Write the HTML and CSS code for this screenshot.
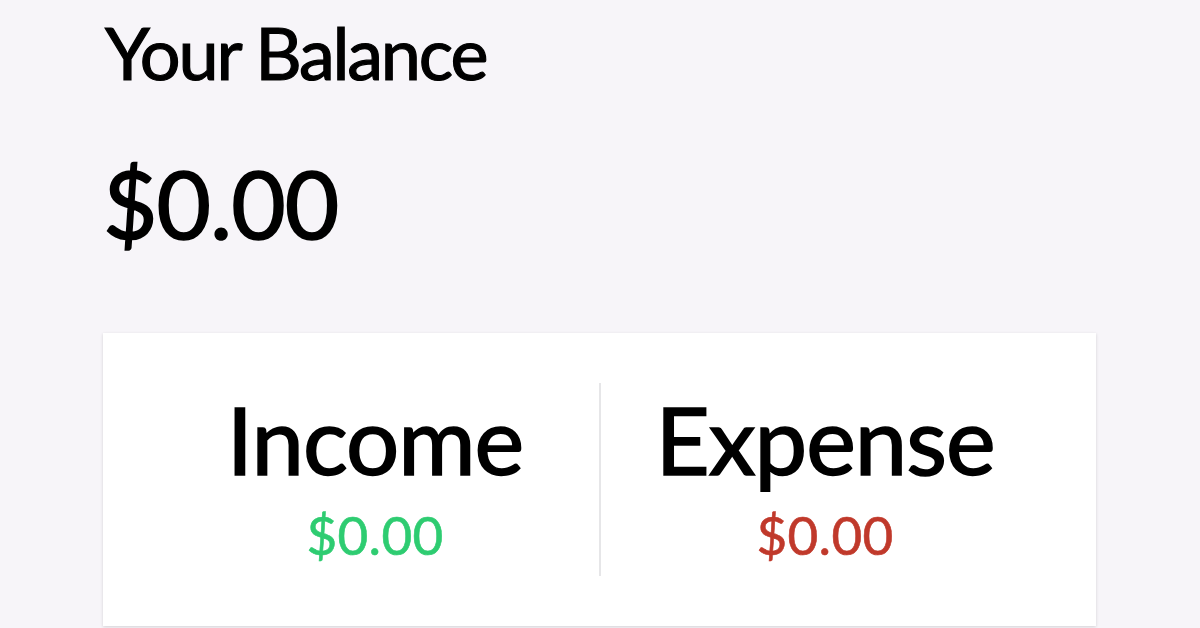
FILE: index.html
```html
<!DOCTYPE html>
<html>
<head>
<meta charset="utf-8">
<link rel="stylesheet" href="styles.css">
</head>
<body>
<div class="container">
  <h4 class="label">Your Balance</h4>
  <h1 class="balance">$0.00</h1>
  <div class="inc-exp">
    <div class="col">
      <h4 class="col-title">Income</h4>
      <p class="money plus">$0.00</p>
    </div>
    <div class="col">
      <h4 class="col-title">Expense</h4>
      <p class="money minus">$0.00</p>
    </div>
  </div>
</div>
</body>
</html>
```

FILE: styles.css
```css
* { box-sizing: border-box; }
html, body { margin: 0; padding: 0; }
body {
  background: #f7f5f9;
  font-family: Lato, "Open Sans", sans-serif;
  color: #000;
  height: 628px;
  overflow: hidden;
}
.container {
  padding: 9px 0 0 103px;
  width: 1096px;
}
.label {
  margin: 0;
  font-size: 72px;
  font-weight: 400;
  line-height: 1.2;
  padding-left: 2px;
  letter-spacing: -2.2px;
  -webkit-text-stroke: 1.2px #000;
}
.balance {
  margin: 52px 0 0 0;
  font-size: 94px;
  font-weight: 400;
  line-height: 1.2;
  padding-left: 0;
  letter-spacing: -1px;
  -webkit-text-stroke: 1.6px #000;
}
.inc-exp {
  margin-top: 73px;
  background: #fff;
  box-shadow: 0 1px 3px rgba(0,0,0,0.15);
  display: flex;
  padding: 50px 47px 50px 48px;
  height: 293px;
}
.col {
  flex: 1;
  text-align: center;
  padding-bottom: 8px;
}
.col + .col {
  border-left: 2px solid #e6e6e8;
}
.col-title {
  margin: 0;
  font-size: 94px;
  font-weight: 400;
  line-height: 1.2;
  letter-spacing: -1px;
  -webkit-text-stroke: 1.6px #000;
}
.money {
  margin: 7px 0 0 0;
  font-size: 53px;
  line-height: 1.2;
  letter-spacing: 0.3px;
  -webkit-text-stroke: 0.6px currentColor;
}
.plus { color: #2ecc71; }
.minus { color: #c0392b; }
```
